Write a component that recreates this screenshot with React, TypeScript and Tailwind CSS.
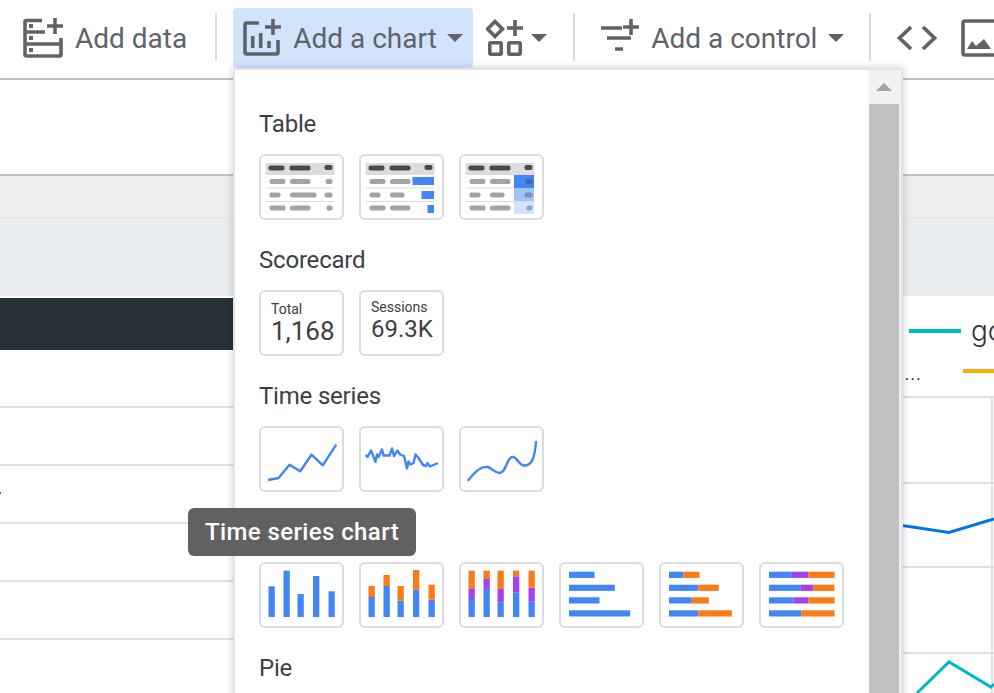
const iconColor = '#5f6368'

function AddDataIcon() {
  return (
    <svg width="40" height="40" viewBox="0 0 40 40" className="shrink-0" fill="none" stroke={iconColor} strokeWidth="3.6">
      <path d="M19 2.5H3.5a1.5 1.5 0 0 0-1.5 1.5V36.5a1.5 1.5 0 0 0 1.5 1.5H36.5a1.5 1.5 0 0 0 1.5-1.5V20" />
      <path d="M2 14H22M2 26H38M32 0V16M24 8H40" />
      <rect x="6" y="6" width="4" height="4" fill={iconColor} stroke="none" />
      <rect x="6" y="18" width="4" height="4" fill={iconColor} stroke="none" />
      <rect x="6" y="30" width="4" height="4" fill={iconColor} stroke="none" />
    </svg>
  )
}

function AddChartIcon() {
  return (
    <svg width="38" height="38" viewBox="0 0 38 38" className="shrink-0" fill="none" stroke={iconColor} strokeWidth="3.6">
      <path d="M16 4H3.5A1.5 1.5 0 0 0 2 5.5V33.5A1.5 1.5 0 0 0 3.5 35H33.5A1.5 1.5 0 0 0 35 33.5V21" />
      <path d="M30 0V16M22 8H38M9.7 17V29M17.7 14V29M26 22V29" />
    </svg>
  )
}

function WidgetIcon() {
  return (
    <svg width="38" height="38" viewBox="0 0 38 38" className="shrink-0" fill="none" stroke={iconColor} strokeWidth="3.6">
      <path d="M9 2.5L16.5 10L9 17.5L1.5 10Z" />
      <path d="M29 1V17M21 9H37" />
      <rect x="3.8" y="23.8" width="11.4" height="11.4" rx="1" />
      <rect x="22.8" y="23.8" width="11.4" height="11.4" rx="1" />
    </svg>
  )
}

function ControlIcon() {
  return (
    <svg width="38" height="38" viewBox="0 0 38 38" className="shrink-0" fill="none" stroke={iconColor} strokeWidth="3.6">
      <path d="M0 9H21M6 19H30M14 30H22M30 0V16M22 8H38" />
    </svg>
  )
}

function CodeIcon() {
  return (
    <svg width="40" height="40" viewBox="0 0 40 40" className="shrink-0" fill="none" stroke={iconColor} strokeWidth="3.8">
      <path d="M14 9L2.5 20L14 31M26 9L37.5 20L26 31" />
    </svg>
  )
}

function ImageIcon() {
  return (
    <svg width="40" height="38" viewBox="0 0 40 38" className="shrink-0" fill="none" stroke={iconColor} strokeWidth="3.6">
      <rect x="2" y="2" width="44" height="34" rx="2" />
      <path d="M6 30L11 22L15 27L23 20L30 30Z" fill={iconColor} stroke="none" />
    </svg>
  )
}

function Caret() {
  return (
    <svg width="16" height="8" viewBox="0 0 16 8" className="shrink-0 block">
      <path d="M0 0H16L8 8Z" fill={iconColor} />
    </svg>
  )
}

function Separator() {
  return <div className="w-[2px] h-[48px] bg-[#dadce0] shrink-0" />
}

function Toolbar() {
  return (
    <div className="h-[80px] border-b-2 border-[#bdc1c6] flex items-start overflow-hidden text-[#5f6368] text-[28px] leading-none whitespace-nowrap">
      <div className="flex items-center shrink-0 h-[76px] ml-[23px] gap-[12px]">
        <AddDataIcon />
        <span className="mt-[2px]">Add data</span>
      </div>
      <div className="shrink-0 mt-[13px] ml-[28px]"><Separator /></div>
      <div className="shrink-0 mt-[8px] ml-[16px] w-[240px] h-[60px] rounded bg-[#d2e3fc] flex items-center pl-[10px]">
        <AddChartIcon />
        <span className="ml-[12px] mt-[2px]">Add a chart</span>
        <span className="ml-[10px]"><Caret /></span>
      </div>
      <div className="shrink-0 flex items-center h-[76px] ml-[13px]">
        <WidgetIcon />
        <span className="ml-[7px]"><Caret /></span>
      </div>
      <div className="shrink-0 mt-[13px] ml-[26px]"><Separator /></div>
      <div className="shrink-0 flex items-center h-[76px] ml-[26px]">
        <ControlIcon />
        <span className="ml-[12px] mt-[2px]">Add a control</span>
        <span className="ml-[11px]"><Caret /></span>
      </div>
      <div className="shrink-0 mt-[13px] ml-[25px]"><Separator /></div>
      <div className="shrink-0 flex items-center h-[76px] ml-[26px] gap-[24px]">
        <CodeIcon />
        <ImageIcon />
      </div>
    </div>
  )
}

function Tile({ children }: { children?: React.ReactNode }) {
  return (
    <div className="w-[85px] h-[66px] shrink-0 rounded-md bg-white shadow-[inset_0_0_0_2px_#dadce0] overflow-hidden">
      {children}
    </div>
  )
}

function Mini({ children }: { children: React.ReactNode }) {
  return (
    <svg width="85" height="66" viewBox="-0.5 0 85 66" className="block">
      {children}
    </svg>
  )
}

const dark = '#4a4a4a'
const mid = '#a3a3a3'
const blue = '#4285f4'
const orange = '#fa7b17'
const purple = '#a142f4'

// pill x ranges for each table row
const tableRows: [number, [number, number][]][] = [
  [27.5, [[10, 26], [30.5, 51], [66, 73]]],
  [41, [[10, 21], [30.5, 57], [65, 73]]],
  [54, [[10, 26], [30.5, 51], [67, 73]]],
]

function TableBase({ under, cellFill }: { under?: React.ReactNode; cellFill?: string[] }) {
  return (
    <Mini>
      <rect x="6" y="9" width="69" height="12" fill="#dadce0" />
      <rect x="9" y="11.5" width="16" height="5" rx="2" fill={dark} />
      <rect x="30" y="11.5" width="21" height="5" rx="2" fill={dark} />
      <rect x="65" y="11" width="8" height="5" rx="2" fill={dark} />
      <rect x="6" y="33.5" width="69" height="1" fill="#dadce0" />
      <rect x="6" y="47" width="69" height="1" fill="#dadce0" />
      {under}
      {tableRows.map(([y, pills], r) =>
        pills.map(([a, b], i) => {
          if (i === 2 && cellFill && !cellFill[r]) return null
          // the tables with coloured cells have a shorter middle pill in row two
          const end = cellFill && r === 1 && i === 1 ? 45 : b
          return (
            <rect
              key={`${r}-${i}`}
              x={a}
              y={y - 2.5}
              width={end - a}
              height="5"
              rx="2"
              fill={i === 2 && cellFill ? cellFill[r] : mid}
            />
          )
        })
      )}
    </Mini>
  )
}

function Table1() {
  return <TableBase />
}

function Table2() {
  return (
    <TableBase
      cellFill={['', '', '']}
      under={
        <>
          <rect x="53" y="23" width="21.5" height="8" fill={blue} />
          <rect x="62" y="37" width="12.5" height="8" fill={blue} />
          <rect x="68" y="51" width="6.5" height="8" fill={blue} />
        </>
      }
    />
  )
}

function Table3() {
  return (
    <TableBase
      cellFill={['#3f68b0', '#7791bd', '#8ea3c4']}
      under={
        <>
          <rect x="54.5" y="21" width="20" height="13" fill={blue} />
          <rect x="54.5" y="34" width="20" height="13" fill="#a1c2fa" />
          <rect x="54.5" y="48" width="20" height="12" fill="#d2e3fc" />
        </>
      }
    />
  )
}

function Score({ label, value, sessions }: { label: string; value: string; sessions?: boolean }) {
  return (
    <Tile>
      <div className={`pl-[12px] text-[#3c4043] ${sessions ? 'pt-[9px]' : 'pt-[11px]'}`}>
        <div className="text-[14px] leading-[16px]">{label}</div>
        <div className={sessions ? 'text-[24px] leading-[30px] -mt-[1px]' : 'text-[26px] leading-[30px] -mt-[1px]'}>{value}</div>
      </div>
    </Tile>
  )
}

function Line({ points }: { points: string }) {
  return <polyline points={points} fill="none" stroke={blue} strokeWidth="2.4" strokeLinejoin="round" />
}

function Series1() {
  return (
    <Mini>
      <Line points="8.5,54 19,52 30,38.7 40.7,45.3 52,28.7 63.3,39.3 76.7,18.7" />
    </Mini>
  )
}

function Series2() {
  return (
    <Mini>
      <Line points="6,29 8,31 11.5,24.5 16,36 17.5,28.5 19,31 22.5,23.5 24,29.5 30,29.5 32.5,22.5 34.5,30 38,24.5 40.5,28.5 44.5,30 47.5,42.5 49,35.5 51,38.5 54,37 56,28.5 59,32 63.5,39 66.5,40 68,37 70.5,40.5 78.5,37" />
    </Mini>
  )
}

function Series3() {
  return (
    <Mini>
      <path
        d="M9 54C15 46 22 40 28 41C33 42 35 47 40 47C47 47 47 31 53 31C58 31 59 39.5 65 39.5C72 39.5 75 33 76.5 16"
        fill="none"
        stroke={blue}
        strokeWidth="2.4"
        strokeLinecap="round"
      />
    </Mini>
  )
}

// x of each column in the bar tiles
const barX = [9, 24, 38, 53.5, 69]

function Bars({ stacks }: { stacks: [string, number[]][] }) {
  return (
    <Mini>
      {barX.map((x, i) => {
        return stacks.map(([color, tops], s) => {
          const bottom = s === 0 ? 55 : stacks[s - 1][1][i]
          return <rect key={`${i}-${s}`} x={x} y={tops[i]} width="6.3" height={bottom - tops[i]} fill={color} />
        })
      })}
    </Mini>
  )
}

const rowY = [9.7, 22.7, 35.3, 48.3]

function HBars({ stacks }: { stacks: [string, number[]][] }) {
  return (
    <Mini>
      {rowY.map((y, i) =>
        stacks.map(([color, ends], s) => {
          const start = s === 0 ? 9.5 : stacks[s - 1][1][i]
          return <rect key={`${i}-${s}`} x={start} y={y} width={ends[i] - start} height="6.2" fill={color} />
        })
      )}
    </Mini>
  )
}

function Section({ title, children }: { title: string; children?: React.ReactNode }) {
  return (
    <div className="mb-[24px]">
      <div className="h-[32px] leading-[32px] text-[24px] tracking-[-0.2px] text-[#3c4043] mb-[14px]">{title}</div>
      <div className="flex gap-[15px]">{children}</div>
    </div>
  )
}

function ChartMenu() {
  return (
    <div className="absolute left-[233px] top-[68px] w-[670px] h-[640px] bg-white border-2 border-[#e3e4e7] shadow-[0_0_8px_rgba(0,0,0,0.2)] flex">
      <div className="flex-1 pl-[24px] pt-[38px] overflow-hidden">
        <Section title="Table">
          <Tile><Table1 /></Tile>
          <Tile><Table2 /></Tile>
          <Tile><Table3 /></Tile>
        </Section>
        <Section title="Scorecard">
          <Score label="Total" value="1,168" />
          <Score label="Sessions" value="69.3K" sessions />
        </Section>
        <Section title="Time series">
          <Tile><Series1 /></Tile>
          <Tile><Series2 /></Tile>
          <Tile><Series3 /></Tile>
        </Section>
        <Section title="Bar">
          <Tile>
            <Bars stacks={[[blue, [24.3, 8.7, 32, 14, 29.3]]]} />
          </Tile>
          <Tile>
            <Bars stacks={[[blue, [35, 24, 38.7, 27.7, 37.7]], [orange, [24, 13, 24, 8, 22.7]]]} />
          </Tile>
          <Tile>
            <Bars stacks={[[blue, [37, 27, 40.3, 30.3, 39.7]], [purple, [27, 17, 27, 14.3, 25.7]], [orange, [8.7, 8.7, 8.7, 8.7, 8.7]]]} />
          </Tile>
          <Tile>
            <HBars stacks={[[blue, [35, 55.3, 40, 70.7]]]} />
          </Tile>
          <Tile>
            <HBars stacks={[[blue, [24, 39, 32.3, 39]], [orange, [40, 59.3, 49.3, 72.3]]]} />
          </Tile>
          <Tile>
            <HBars stacks={[[blue, [31.7, 40.7, 34, 42]], [purple, [48.7, 54, 48.7, 42]], [orange, [75, 75, 75, 75]]]} />
          </Tile>
        </Section>
        <Section title="Pie">
          <Tile />
        </Section>
      </div>
      <div className="w-[32px] shrink-0 bg-[#f1f1f1] pr-[2px] flex flex-col">
        <div className="h-[34px] shrink-0 flex justify-center items-start pt-[13px]">
          <svg width="16" height="8" viewBox="0 0 16 8">
            <path d="M8 0L16 8H0Z" fill="#a3a3a3" />
          </svg>
        </div>
        <div className="flex-1 bg-[#c1c1c1]" />
      </div>
    </div>
  )
}

function LeftTable() {
  return (
    <div className="w-[234px] shrink-0 pt-[2px]">
      <div className="h-[52px] bg-[#263238]" />
      <div className="h-[58px] border-b-2 border-[#e0e0e0]" />
      <div className="h-[58px] border-b-2 border-[#e0e0e0]" />
      <div className="h-[58px] border-b-2 border-[#e0e0e0] flex items-center overflow-hidden">
        <span className="-ml-[9px] text-[20px] text-[#333333] font-['Lato',sans-serif]">y</span>
      </div>
      <div className="h-[58px] border-b-2 border-[#e0e0e0]" />
      <div className="h-[58px] border-b-2 border-[#e0e0e0]" />
    </div>
  )
}

function RightChart() {
  return (
    <div className="flex-1 min-w-0 overflow-hidden">
      <div className="h-[70px] flex items-center pl-[7px]">
        <div className="w-[52px] h-[4px] shrink-0 bg-[#00b8cc]" />
        <span className="ml-[10px] text-[28px] font-light text-[#333333] font-['Inter',sans-serif]">go</span>
      </div>
      <div className="h-[30px] flex items-start pt-[3px]">
        <span className="w-[61px] shrink-0 pl-[3px] -mt-[3px] text-[16px] leading-[16px] tracking-[2px] text-[#333333] font-['Lato',sans-serif]">...</span>
        <div className="flex-1 h-[4px] bg-[#ffab00]" />
      </div>
      <svg width="92" height="297" viewBox="0 0 92 297" className="block" fill="none">
        <path d="M0 1H92M0 87H92M0 171H92M0 257H92M90 0V297" stroke="#e0e0e0" strokeWidth="2" />
        <path d="M0 129.5L47 136.5L92 123" stroke="#0072f0" strokeWidth="3" />
        <path d="M15 297L47 266L89 291L92 288" stroke="#00b8cc" strokeWidth="3" />
      </svg>
    </div>
  )
}

export default function App() {
  return (
    <div className="relative w-[994px] h-[693px] overflow-hidden bg-white font-['Roboto',sans-serif]">
      <Toolbar />
      <div className="h-[96px] border-b-2 border-[#bdc1c6]" />
      <div className="h-[42px] bg-[#eeeeee] border-b border-[#e4e2e0]" />
      <div className="h-[78px] bg-[#e9edf0]" />
      <div className="flex">
        <LeftTable />
        <div className="w-[668px] shrink-0" />
        <RightChart />
      </div>
      <ChartMenu />
      {/* Tooltip over the time series tile */}
      <div className="absolute left-[188px] top-[508px] w-[228px] h-[48px] rounded-md bg-[#616161] text-white text-[24px] tracking-[0.4px] font-medium flex items-center justify-center whitespace-nowrap">
        Time series chart
      </div>
    </div>
  )
}
